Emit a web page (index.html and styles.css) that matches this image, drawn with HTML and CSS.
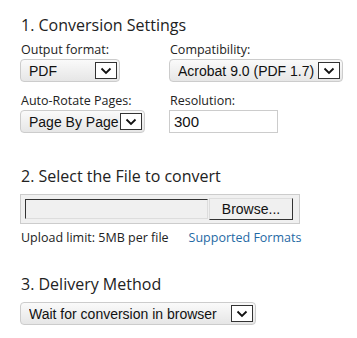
FILE: index.html
```html
<!DOCTYPE html>
<html lang="en">
<head>
  <meta charset="UTF-8">
  <title>Convert to PDF</title>
  <link rel="stylesheet" href="styles.css">
</head>
<body>
  <div class="converter">
    <!-- Step 1 -->
    <h2 class="step-title">1. Conversion Settings</h2>
    <div class="settings-grid">
      <div class="field">
        <label>Output format:</label>
        <div class="select-box w-format">
          <span class="select-value">PDF</span>
          <span class="select-arrow"><svg width="12" height="8" viewBox="0 0 12 8"><path d="M1.5 1.5 L6 6 L10.5 1.5" fill="none" stroke="#111" stroke-width="1.8"/></svg></span>
        </div>
      </div>
      <div class="field">
        <label>Compatibility:</label>
        <div class="select-box w-compat">
          <span class="select-value">Acrobat 9.0 (PDF 1.7)</span>
          <span class="select-arrow"><svg width="12" height="8" viewBox="0 0 12 8"><path d="M1.5 1.5 L6 6 L10.5 1.5" fill="none" stroke="#111" stroke-width="1.8"/></svg></span>
        </div>
      </div>
      <div class="field">
        <label>Auto-Rotate Pages:</label>
        <div class="select-box w-rotate">
          <span class="select-value">Page By Page</span>
          <span class="select-arrow"><svg width="12" height="8" viewBox="0 0 12 8"><path d="M1.5 1.5 L6 6 L10.5 1.5" fill="none" stroke="#111" stroke-width="1.8"/></svg></span>
        </div>
      </div>
      <div class="field">
        <label>Resolution:</label>
        <input class="text-input" type="text" value="300">
      </div>
    </div>

    <!-- Step 2 -->
    <h2 class="step-title">2. Select the File to convert</h2>
    <div class="file-box">
      <span class="file-name"></span>
      <button class="browse-btn">Browse...</button>
    </div>
    <div class="file-notes">
      <span>Upload limit: 5MB per file</span>
      <a href="#" class="formats-link">Supported Formats</a>
    </div>

    <!-- Step 3 -->
    <h2 class="step-title">3. Delivery Method</h2>
    <div class="select-box w-delivery">
      <span class="select-value">Wait for conversion in browser</span>
      <span class="select-arrow"><svg width="12" height="8" viewBox="0 0 12 8"><path d="M1.5 1.5 L6 6 L10.5 1.5" fill="none" stroke="#111" stroke-width="1.8"/></svg></span>
    </div>
  </div>
</body>
</html>
```

FILE: styles.css
```css
body {
  margin: 0;
  padding: 0;
  background: #fff;
  font-family: 'Open Sans', sans-serif;
  color: #222;
}
.converter {
  padding: 14px 0 0 20px;
}
.step-title {
  margin: 0 0 0 1px;
  font-size: 16px;
  font-weight: normal;
  line-height: 22px;
  color: #222;
}
.settings-grid {
  display: grid;
  grid-template-columns: 149px auto;
  row-gap: 11px;
  margin-top: 6px;
  margin-bottom: 32px;
}
.field label {
  display: block;
  font-size: 12.5px;
  line-height: 16px;
  margin: 0 0 1px 1px;
}
.select-box {
  display: flex;
  align-items: center;
  justify-content: space-between;
  height: 21px;
  padding: 0 2px 0 8px;
  border: 1px solid #ccc;
  border-radius: 4px;
  background: linear-gradient(#fafafa, #e6e6e6);
  font-family: 'Liberation Sans', Arial, sans-serif;
  font-size: 14px;
  color: #111;
  white-space: nowrap;
  box-sizing: content-box;
}
.select-value {
  overflow: hidden;
}
.select-arrow {
  flex: none;
  display: flex;
  align-items: center;
  justify-content: center;
  width: 20px;
  height: 15px;
  border: 1px solid #333;
  background: #fff;
}
.w-format { width: 88px; }
.w-compat { width: 162px; padding-left: 8px; }
.w-rotate { width: 113px; padding-left: 8px; }
.w-delivery { width: 224px; margin-top: 7px; }
.text-input {
  width: 99px;
  height: 19px;
  margin: 0;
  padding: 1px 4px;
  border: 1px solid #ccc;
  font-family: 'Liberation Sans', Arial, sans-serif;
  font-size: 15px;
  color: #111;
  outline: none;
}
.file-box {
  display: flex;
  align-items: center;
  gap: 1px;
  width: 270px;
  margin-top: 7px;
  padding: 3px 4px;
  border: 1px solid #ccc;
  background: #f0f0f0;
}
.file-name {
  width: 181px;
  height: 18px;
  border: 1px solid #333;
  border-right-color: #ddd;
  border-bottom-color: #ddd;
  background: #f0f0f0;
}
.browse-btn {
  width: 84px;
  height: 22px;
  margin: 0;
  border: 1px solid #333;
  border-top-color: #ddd;
  border-left-color: #ddd;
  background: #f0f0f0;
  font-family: 'Liberation Sans', Arial, sans-serif;
  font-size: 14px;
  color: #111;
}
.file-notes {
  display: flex;
  gap: 20px;
  margin: 6px 0 27px 1px;
  font-size: 12.5px;
  line-height: 16px;
}
.formats-link {
  color: #1f6aa5;
  text-decoration: none;
}
```
